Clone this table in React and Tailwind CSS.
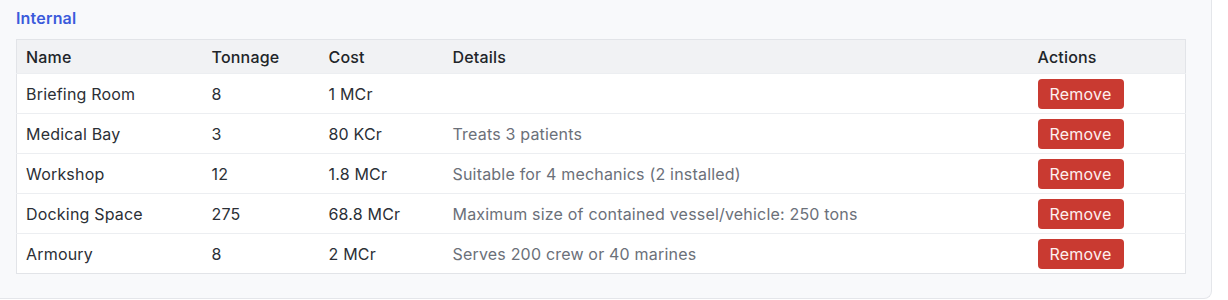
export default function App() {
  const rows = [
    { name: "Briefing Room", tonnage: "8", cost: "1 MCr", details: "" },
    { name: "Medical Bay", tonnage: "3", cost: "80 KCr", details: "Treats 3 patients" },
    { name: "Workshop", tonnage: "12", cost: "1.8 MCr", details: "Suitable for 4 mechanics (2 installed)" },
    { name: "Docking Space", tonnage: "275", cost: "68.8 MCr", details: "Maximum size of contained vessel/vehicle: 250 tons" },
    { name: "Armoury", tonnage: "8", cost: "2 MCr", details: "Serves 200 crew or 40 marines" },
  ];
  return (
    <div className="w-[1228px] h-[300px] bg-white font-['Inter',sans-serif] tracking-[0.012em]">
      <div className="w-[1212px] h-[299px] bg-[#f8f9fb] border-r border-b border-[#e4e6ea] rounded-br-[8px] pl-4 pr-[26px] pt-[8px]">
        <div className="text-[16px] leading-[20px] font-semibold text-[#3b5bdb] mb-[11px]">Internal</div>
        <table className="w-[1169px] border-collapse border border-[#e2e4e8] bg-white text-[16px] table-fixed">
          <colgroup>
            <col className="w-[186px]" />
            <col className="w-[117px]" />
            <col className="w-[124px]" />
            <col className="w-[585px]" />
            <col className="w-[157px]" />
          </colgroup>
          <thead>
            <tr className="bg-[#f1f2f4] h-[34px]">
              <th className="text-left font-medium text-[#212529] pl-[9px] p-0">Name</th>
              <th className="text-left font-medium text-[#212529] pl-[9px] p-0">Tonnage</th>
              <th className="text-left font-medium text-[#212529] pl-[9px] p-0">Cost</th>
              <th className="text-left font-medium text-[#212529] pl-[9px] p-0">Details</th>
              <th className="text-left font-medium text-[#212529] pl-[9px] p-0">Actions</th>
            </tr>
          </thead>
          <tbody>
            {rows.map((r) => (
              <tr key={r.name} className="h-[40px] border-t border-[#eceef1]">
                <td className="pl-[9px] text-[#2b2f36]">{r.name}</td>
                <td className="pl-[9px] text-[#2b2f36]">{r.tonnage}</td>
                <td className="pl-[9px] text-[#2b2f36]">{r.cost}</td>
                <td className="pl-[9px] text-[#6b7079]">{r.details}</td>
                <td className="pl-[9px]">
                  <button className="w-[86px] h-[30px] rounded-[4px] bg-[#c93a31] text-[#fdf0ee] text-[16px] flex items-center justify-center">
                    Remove
                  </button>
                </td>
              </tr>
            ))}
          </tbody>
        </table>
      </div>
    </div>
  );
}
